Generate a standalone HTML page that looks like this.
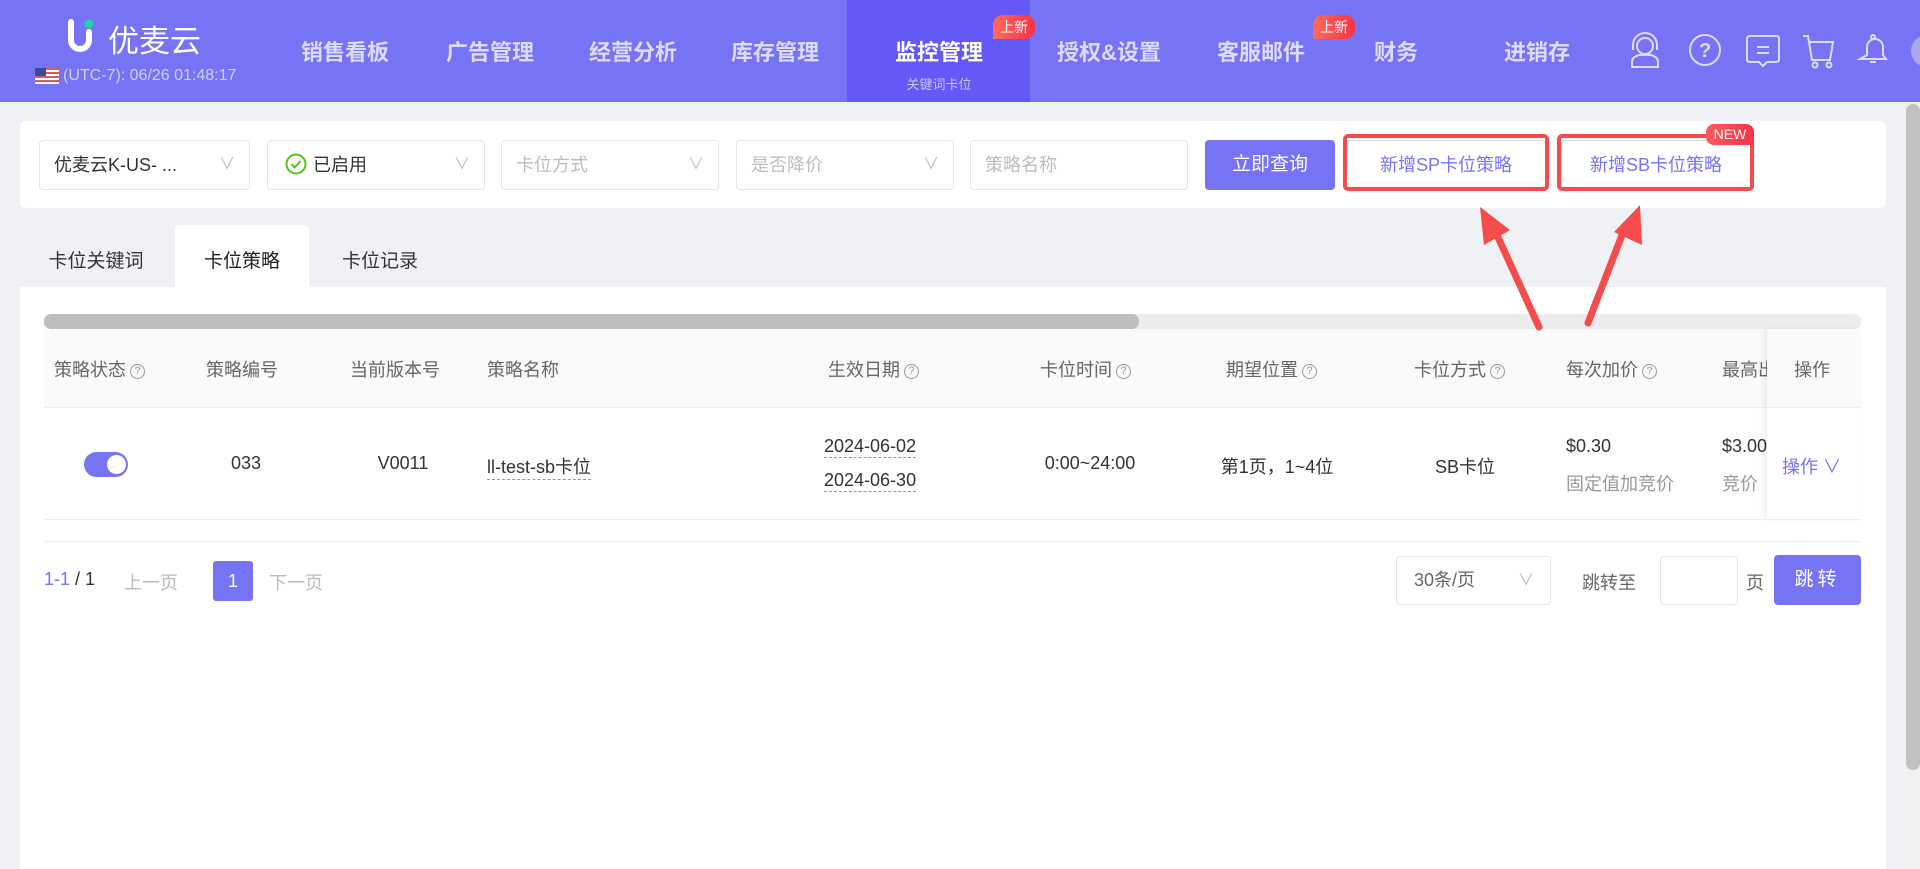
<!DOCTYPE html>
<html><head><meta charset="utf-8">
<style>
*{margin:0;padding:0;box-sizing:border-box}
body{width:1920px;height:869px;overflow:hidden;background:#f0f1f5;font-family:"Liberation Sans","Noto Sans CJK SC",sans-serif;position:relative}
.a{position:absolute;white-space:nowrap}
.hdr{position:absolute;left:0;top:0;width:1920px;height:102px;background:#7673f5}
.nav{position:absolute;top:35px;font-size:22px;font-weight:bold;color:#dcdbfc;transform:translateX(-50%);white-space:nowrap}
.badge{position:absolute;background:linear-gradient(90deg,#ff6a5a,#f5334a);color:#fff;font-size:14px;height:24px;line-height:24px;padding:0 7px;border-radius:10px 10px 10px 0}
.sel{position:absolute;top:140px;height:50px;border:1px solid #e4e5ea;border-radius:4px;background:#fff;font-size:18px;line-height:48px;padding-left:14px;color:#333;white-space:nowrap}
.sel .ch{position:absolute;right:14px;top:0;color:#c0c0c0;font-size:16px}
.ph{color:#bdbdbd}
.th{position:absolute;top:356px;font-size:18px;color:#666;white-space:nowrap}
.q{display:inline-block;width:15px;height:15px;border:1px solid #999;border-radius:50%;font-size:11px;line-height:13px;text-align:center;color:#999;vertical-align:2px;margin-left:4px}
.td{position:absolute;font-size:18px;color:#333;white-space:nowrap}
</style></head><body>
<div class="hdr"></div>
<div class="a" style="left:847px;top:0;width:183px;height:102px;background:#6459f6"></div>
<svg class="a" style="left:66px;top:18px" width="30" height="38" viewBox="0 0 30 38"><path d="M5 4 V22 a9 9 0 0 0 18 0 V14" fill="none" stroke="#fff" stroke-width="6" stroke-linecap="round"/><circle cx="23" cy="6" r="4.5" fill="#22d3a6"/></svg>
<div class="a" style="left:108px;top:16px;font-size:31px;color:#fff">优麦云</div>
<svg class="a" style="left:35px;top:68px" width="24" height="16" viewBox="0 0 24 16"><rect width="24" height="16" fill="#fff"/><g fill="#d85a6a"><rect y="0" width="24" height="2"/><rect y="4" width="24" height="2"/><rect y="8" width="24" height="2"/><rect y="12" width="24" height="2"/></g><rect width="11" height="8" fill="#3b4c8c"/></svg>
<div class="a" style="left:63px;top:67px;font-size:16px;color:#cfcdfa">(UTC-7): 06/26 01:48:17</div>
<div class="nav" style="left:345px">销售看板</div>
<div class="nav" style="left:490px">广告管理</div>
<div class="nav" style="left:633px">经营分析</div>
<div class="nav" style="left:775px">库存管理</div>
<div class="nav" style="left:939px;color:#fff">监控管理</div>
<div class="a" style="left:939px;top:74px;font-size:13px;color:#c8c4fb;transform:translateX(-50%)">关键词卡位</div>
<div class="nav" style="left:1109px">授权&amp;设置</div>
<div class="nav" style="left:1261px">客服邮件</div>
<div class="nav" style="left:1396px">财务</div>
<div class="nav" style="left:1537px">进销存</div>
<div class="badge" style="left:993px;top:15px">上新</div>
<div class="badge" style="left:1313px;top:15px">上新</div>
<svg class="a" style="left:1628px;top:32px" width="260" height="38" viewBox="0 0 260 38" fill="none" stroke="#dcdbfc" stroke-width="2">
<circle cx="17" cy="14" r="8"/><path d="M5 18 V13 a12 12 0 0 1 24 0 V18"/><path d="M4 35 V30 q0-5 7-7 h12 q7 2 7 7 V35 Z"/>
<circle cx="77" cy="18" r="15"/><text x="71" y="25" font-size="20" font-weight="bold" fill="#dcdbfc" stroke="none" font-family="Liberation Sans">?</text>
<path d="M122 4 h26 q3 0 3 3 v20 q0 3 -3 3 h-9 l-4 4 l-4 -4 h-9 q-3 0 -3 -3 v-20 q0 -3 3 -3 Z"/><path d="M129 15 h12 M129 21 h12"/>
<path d="M175 4 h5 l4 24 h18 l3 -18 h-24"/><circle cx="187" cy="33" r="2.5"/><circle cx="201" cy="33" r="2.5"/>
<path d="M232 27 h26 l-3 -4 v-8 a8 8 0 0 0 -16 0 v8 Z"/><path d="M242 30 h6"/><circle cx="245" cy="5" r="2"/>
</svg>
<div class="a" style="left:1911px;top:35px;width:32px;height:32px;border-radius:50%;background:#a9a8ea"></div>
<div class="a" style="left:1904px;top:102px;width:16px;height:767px;background:#f1f1f1"></div>
<div class="a" style="left:1906px;top:104px;width:14px;height:666px;background:#c1c1c1;border-radius:7px"></div>
<div class="a" style="left:20px;top:121px;width:1866px;height:87px;background:#fff;border-radius:5px"></div>
<div class="sel" style="left:39px;width:211px">优麦云K-US- ...<span class="ch">∨</span></div>
<div class="sel" style="left:267px;width:218px;padding-left:17px"><svg style="vertical-align:-4px;margin-right:6px" width="22" height="22" viewBox="0 0 22 22" fill="none" stroke="#52c41a" stroke-width="2"><circle cx="11" cy="11" r="9.5"/><path d="M6.5 11 l3 3.5 l6 -6.5"/></svg>已启用<span class="ch">∨</span></div>
<div class="sel" style="left:501px;width:218px"><span class="ph">卡位方式</span><span class="ch">∨</span></div>
<div class="sel" style="left:736px;width:218px"><span class="ph">是否降价</span><span class="ch">∨</span></div>
<div class="sel" style="left:970px;width:218px"><span class="ph">策略名称</span></div>
<div class="a" style="left:1205px;top:140px;width:130px;height:50px;background:#7673f5;border-radius:4px;color:#fff;font-size:19px;line-height:50px;text-align:center">立即查询</div>
<div class="a" style="left:1346px;top:140px;width:200px;height:50px;background:#fff;border:1px solid #ddd;border-radius:4px;color:#7673f5;font-size:18px;line-height:48px;text-align:center">新增SP卡位策略</div>
<div class="a" style="left:1561px;top:140px;width:190px;height:50px;background:#fff;border:1px solid #ddd;border-radius:4px;color:#7673f5;font-size:18px;line-height:48px;text-align:center">新增SB卡位策略</div>
<div class="a" style="left:1343px;top:134px;width:206px;height:57px;border:4px solid #f44b4b;border-radius:5px"></div>
<div class="a" style="left:1557px;top:134px;width:197px;height:57px;border:4px solid #f44b4b;border-radius:5px"></div>
<div class="a" style="left:1706px;top:124px;width:48px;height:21px;background:linear-gradient(90deg,#ff5a5a,#f5334a);border-radius:8px 8px 0 8px;color:#fff;font-size:14px;line-height:21px;text-align:center">NEW</div>
<div class="a" style="left:175px;top:225px;width:134px;height:62px;background:#fff;border-radius:4px 4px 0 0"></div>
<div class="a" style="left:96px;top:246px;font-size:19px;color:#333;transform:translateX(-50%)">卡位关键词</div>
<div class="a" style="left:242px;top:246px;font-size:19px;color:#222;transform:translateX(-50%)">卡位策略</div>
<div class="a" style="left:380px;top:246px;font-size:19px;color:#333;transform:translateX(-50%)">卡位记录</div>
<div class="a" style="left:20px;top:287px;width:1866px;height:582px;background:#fff"></div>
<div class="a" style="left:44px;top:314px;width:1817px;height:15px;background:#ececec;border-radius:7px"></div>
<div class="a" style="left:44px;top:314px;width:1095px;height:15px;background:#bebebe;border-radius:7px"></div>
<div class="a" style="left:44px;top:329px;width:1817px;height:79px;background:#fafafa;border-bottom:1px solid #eee"></div>
<div class="th" style="left:54px">策略状态<span class="q">?</span></div>
<div class="th" style="left:206px">策略编号</div>
<div class="th" style="left:350px">当前版本号</div>
<div class="th" style="left:487px">策略名称</div>
<div class="th" style="left:828px">生效日期<span class="q">?</span></div>
<div class="th" style="left:1040px">卡位时间<span class="q">?</span></div>
<div class="th" style="left:1226px">期望位置<span class="q">?</span></div>
<div class="th" style="left:1414px">卡位方式<span class="q">?</span></div>
<div class="th" style="left:1566px">每次加价<span class="q">?</span></div>
<div class="th" style="left:1722px">最高出价</div>
<div class="td" style="left:1566px;top:436px">$0.30</div>
<div class="td" style="left:1566px;top:470px;color:#999">固定值加竞价</div>
<div class="td" style="left:1722px;top:436px">$3.00</div>
<div class="td" style="left:1722px;top:470px;color:#999">竞价</div>
<div class="a" style="left:1767px;top:329px;width:94px;height:190px;background:#fff;box-shadow:-4px 0 6px rgba(0,0,0,.06)"></div>
<div class="a" style="left:1767px;top:329px;width:94px;height:79px;background:#fafafa;border-bottom:1px solid #eee"></div>
<div class="th" style="left:1794px">操作</div>
<div class="a" style="left:44px;top:519px;width:1817px;height:1px;background:#eee"></div>
<div class="a" style="left:44px;top:541px;width:1817px;height:1px;background:#eee"></div>
<div class="a" style="left:84px;top:452px;width:44px;height:25px;border-radius:13px;background:#7673f5"></div>
<div class="a" style="left:107px;top:455px;width:19px;height:19px;border-radius:50%;background:#fff"></div>
<div class="td" style="left:246px;top:453px;transform:translateX(-50%)">033</div>
<div class="td" style="left:403px;top:453px;transform:translateX(-50%)">V0011</div>
<div class="td" style="left:487px;top:453px;border-bottom:1px dashed #999">ll-test-sb卡位</div>
<div class="td" style="left:824px;top:436px;border-bottom:1px dashed #999">2024-06-02</div>
<div class="td" style="left:824px;top:470px;border-bottom:1px dashed #999">2024-06-30</div>
<div class="td" style="left:1090px;top:453px;transform:translateX(-50%)">0:00~24:00</div>
<div class="td" style="left:1277px;top:453px;transform:translateX(-50%)">第1页，1~4位</div>
<div class="td" style="left:1465px;top:453px;transform:translateX(-50%)">SB卡位</div>
<div class="td" style="left:1782px;top:453px;color:#7673f5">操作 ∨</div>
<div class="a" style="left:44px;top:569px;font-size:18px;color:#333"><span style="color:#7673f5">1-1</span> / 1</div>
<div class="a" style="left:124px;top:569px;font-size:18px;color:#bbb">上一页</div>
<div class="a" style="left:213px;top:561px;width:40px;height:40px;background:#7673f5;border-radius:3px;color:#fff;font-size:18px;line-height:40px;text-align:center">1</div>
<div class="a" style="left:269px;top:569px;font-size:18px;color:#bbb">下一页</div>
<div class="a" style="left:1396px;top:556px;width:155px;height:49px;border:1px solid #e4e5ea;border-radius:4px;font-size:18px;line-height:47px;padding-left:17px;color:#666">30条/页<span style="position:absolute;right:16px;color:#bbb;font-size:16px">∨</span></div>
<div class="a" style="left:1582px;top:569px;font-size:18px;color:#666">跳转至</div>
<div class="a" style="left:1660px;top:556px;width:78px;height:49px;border:1px solid #e4e5ea;border-radius:4px"></div>
<div class="a" style="left:1746px;top:569px;font-size:18px;color:#666">页</div>
<div class="a" style="left:1774px;top:555px;width:87px;height:50px;background:#7673f5;border-radius:4px;color:#fff;font-size:19px;line-height:50px;text-align:center;letter-spacing:4px">跳转</div>
<svg class="a" style="left:0;top:0" width="1920" height="869">
<g stroke="#f44b4b" stroke-width="7" stroke-linecap="round" fill="#f44b4b">
<line x1="1539" y1="327" x2="1497" y2="235"/>
<line x1="1588" y1="323" x2="1624" y2="230"/>
</g>
<polygon points="1480,207 1510,230 1484,245" fill="#f44b4b"/>
<polygon points="1640,205 1642,245 1614,232" fill="#f44b4b"/>
</svg>
</body></html>
